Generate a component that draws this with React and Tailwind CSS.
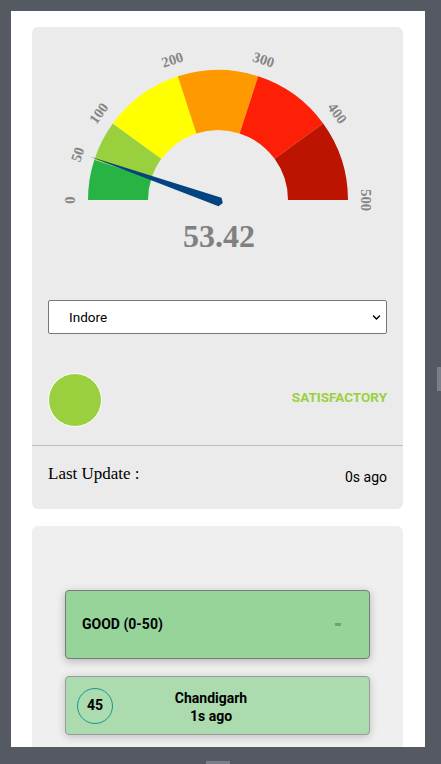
import { FaChevronDown } from "react-icons/fa";

const CX = 186;
const CY = 173;
const R = 130;
const r = 70;

const segments = [
  { from: 0, to: 50, color: "#28b345" },
  { from: 50, to: 100, color: "#99d03d" },
  { from: 100, to: 200, color: "#ffff00" },
  { from: 200, to: 300, color: "#ff9900" },
  { from: 300, to: 400, color: "#fe1f07" },
  { from: 400, to: 500, color: "#bc1400" },
];

const labels = [0, 50, 100, 200, 300, 400, 500];

function pt(radius, value) {
  const a = ((180 - (value / 500) * 180) * Math.PI) / 180;
  return [CX + radius * Math.cos(a), CY - radius * Math.sin(a)];
}

function arcPath(from, to) {
  const [x1, y1] = pt(R, from);
  const [x2, y2] = pt(R, to);
  const [x3, y3] = pt(r, to);
  const [x4, y4] = pt(r, from);
  return `M${x1} ${y1} A${R} ${R} 0 0 1 ${x2} ${y2} L${x3} ${y3} A${r} ${r} 0 0 0 ${x4} ${y4} Z`;
}

function Needle({ value }) {
  const a = ((180 - (value / 500) * 180) * Math.PI) / 180;
  const ux = Math.cos(a);
  const uy = -Math.sin(a);
  const nx = -uy;
  const ny = ux;
  const px = CX + 2;
  const py = CY + 2;
  const tip = [px + 138 * ux, py + 138 * uy];
  const b1 = [px + 4.5 * nx, py + 4.5 * ny];
  const b2 = [px - 4.5 * nx, py - 4.5 * ny];
  const tail = [px - 3 * ux, py - 3 * uy];
  const pts = [tip, b1, tail, b2].map((p) => p.join(",")).join(" ");
  return <polygon points={pts} fill="#03437f" />;
}

function Gauge({ value }) {
  return (
    <svg width="371" height="273" className="block">
      {segments.map((s) => (
        <path key={s.from} d={arcPath(s.from, s.to)} fill={s.color} />
      ))}
      {labels.map((l) => {
        const [x, y] = pt(146, l);
        const rot = (l / 500) * 180 - 90;
        return (
          <text
            key={l}
            x={x}
            y={y}
            fill="#858585"
            fontSize="14.5"
            fontWeight="bold"
            fontFamily="'Liberation Serif', serif"
            textAnchor="middle"
            dominantBaseline="middle"
            transform={`rotate(${rot} ${x} ${y})`}
          >
            {l}
          </text>
        );
      })}
      <Needle value={value} />
      <text
        x={CX + 1}
        y={220}
        fill="#808080"
        fontSize="32"
        fontWeight="bold"
        fontFamily="'Liberation Serif', serif"
        textAnchor="middle"
      >
        {value}
      </text>
    </svg>
  );
}

export default function App() {
  return (
    <div
      className="relative h-[764px] overflow-hidden bg-[#555962] pt-[11px] pl-[11px]"
      style={{ fontFamily: "Roboto, 'Liberation Sans', sans-serif" }}
    >
      <div className="h-[736px] w-[414px] overflow-hidden bg-white pl-[21px] pt-[16px]">
        <div className="w-[371px] rounded-md bg-[#ebebeb]">
          <Gauge value={53.42} />
          <div className="px-4">
            <div className="relative">
              <select className="h-[34px] w-full appearance-none rounded-[2px] border border-[#767676] bg-white pl-[20px] text-[13.5px] text-black outline-none">
                <option>Indore</option>
              </select>
              <FaChevronDown className="pointer-events-none absolute right-[6px] top-[13px] text-[9px] text-black" />
            </div>
            <div className="mt-[39px] flex items-center justify-between">
              <div className="h-[54px] w-[54px] rounded-full border border-white bg-[#9ad03e]" />
              <span className="mb-[6px] text-[13.5px] font-bold text-[#9ad03e]">SATISFACTORY</span>
            </div>
          </div>
          <div className="mt-[18px] h-px bg-[#bcbcbc]" />
          <div className="flex items-start justify-between px-4 pt-[15px] pb-[21px]">
            <span className="text-[17px] text-black" style={{ fontFamily: "'Liberation Serif', serif" }}>
              Last Update :
            </span>
            <span className="mt-[6px] text-[14px] text-black">0s ago</span>
          </div>
        </div>

        <div className="mt-[17px] h-[300px] w-[371px] rounded-t-md bg-[#efefef] px-[33px] pt-[64px]">
          <div className="flex h-[69px] items-center justify-between rounded-[4px] border border-[#7a7a7a] bg-[#96d49a] pl-4 pr-[28px] shadow-[0_2px_8px_rgba(0,0,0,0.25)]">
            <span className="text-[14px] font-bold text-black">GOOD (0-50)</span>
            <span className="h-[3px] w-[6px] bg-[#7b9b7d]" />
          </div>
          <div className="mt-[17px] flex h-[59px] items-center rounded-[4px] border border-[#9a9a9a] bg-[#abdbae] pl-[11px] shadow-[0_2px_8px_rgba(0,0,0,0.2)]">
            <div className="flex h-[36px] w-[36px] items-center justify-center rounded-full border border-[#139a8f] text-[14px] font-bold text-black">
              45
            </div>
            <div className="ml-[30px] flex w-[136px] flex-col items-center pt-[2px] text-[14px] font-bold leading-[18px] text-black">
              <span>Chandigarh</span>
              <span>1s ago</span>
            </div>
          </div>
        </div>
      </div>
      <div className="absolute right-0 top-[367px] h-[24px] w-[4px] bg-[#7a7e86]" />
      <div className="absolute bottom-0 left-[206px] h-[3px] w-[24px] bg-[#7a7e86]" />
    </div>
  );
}
